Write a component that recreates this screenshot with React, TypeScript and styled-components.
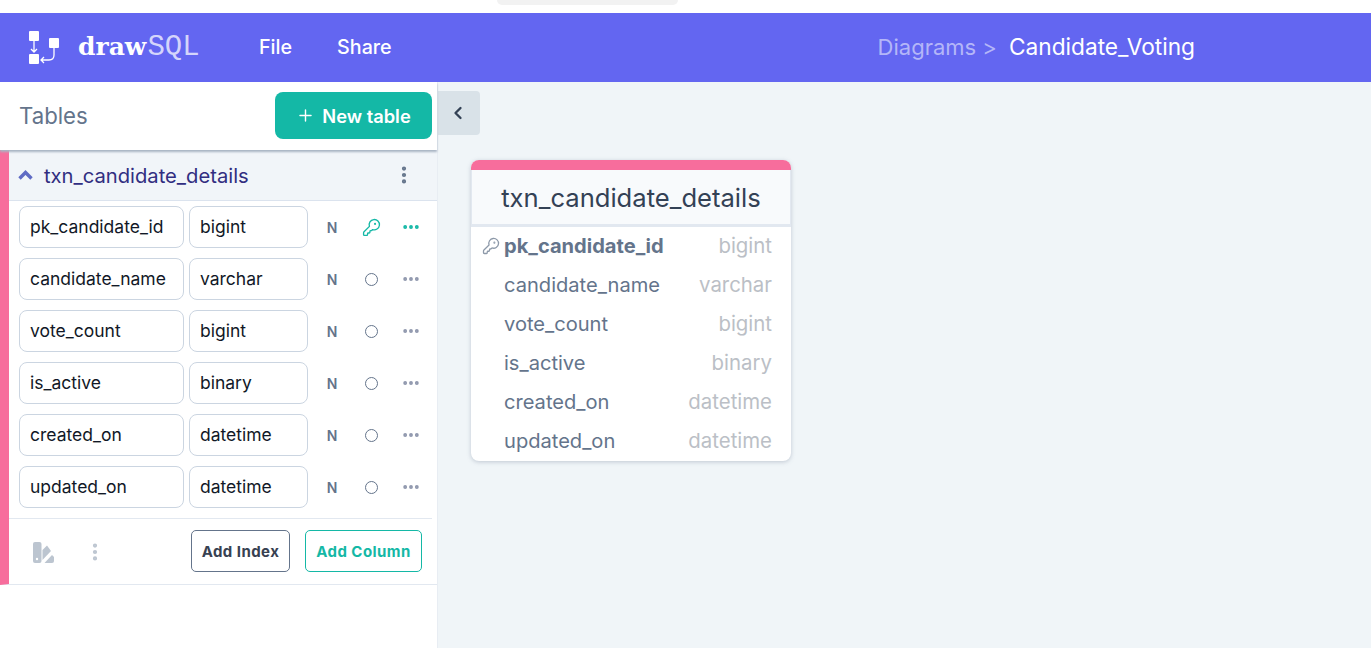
import React from 'react';
import styled, { createGlobalStyle } from 'styled-components';
import { ChevronLeft, KeyRound, MoreHorizontal, MoreVertical, Plus } from 'lucide-react';

const GlobalStyle = createGlobalStyle`
    html, body {
        margin: 0;
        height: 100%;
        overflow: hidden;
        background: #fff;
        font-family: Inter, "Liberation Sans", sans-serif;
    }
    * { box-sizing: border-box; }
`

const Page = styled.div`
    width: 1371px;
    height: 648px;
    display: flex;
    flex-direction: column;
    position: relative;
`

const TopStrip = styled.div`
    height: 13px;
    flex: none;
    padding-left: 497px;
`

const BrowserPill = styled.div`
    width: 181px;
    height: 5px;
    background: #f2f2f2;
    border-radius: 0 0 10px 10px;
`

const Header = styled.header`
    height: 69px;
    flex: none;
    background: #6366f1;
    display: flex;
    align-items: center;
    padding: 0 0 2px 27px;
    color: #fff;
`

const Brand = styled.div`
    display: flex;
    align-items: center;
    width: 232px;
    padding-top: 2px;
`

const BrandText = styled.div`
    margin-left: 18px;
    display: flex;
    align-items: baseline;
`

const BrandBold = styled.span`
    font-family: "DejaVu Serif", serif;
    font-weight: 700;
    font-size: 25px;
`

const BrandLight = styled.span`
    font-family: "Liberation Mono", monospace;
    font-size: 29px;
    color: #d4d5fb;
    margin-left: 1px;
`

const NavItem = styled.div`
    font-size: 19.7px;
    font-weight: 500;
    margin-right: 45px;
`

const Breadcrumb = styled.div`
    margin-left: auto;
    margin-right: 176px;
    display: flex;
    align-items: baseline;
    gap: 12px;
    font-size: 22.7px;
`

const Crumb = styled.span`
    color: #b4b6f8;
    font-size: 22px;
`

const Main = styled.div`
    flex: 1;
    display: flex;
    min-height: 0;
`

const Sidebar = styled.aside`
    width: 437px;
    flex: none;
    background: #fff;
`

const SidebarHead = styled.div`
    height: 68px;
    padding: 10px 5px 0 19px;
    display: flex;
    justify-content: space-between;
    align-items: flex-start;
    box-shadow: 0 2px 2px #a9b4c4;
    position: relative;
`

const SidebarTitle = styled.div`
    font-size: 22.2px;
    line-height: 48px;
    color: #64748b;
`

const NewTable = styled.button`
    width: 157px;
    height: 47px;
    border: 0;
    border-radius: 8px;
    background: #14b8a6;
    color: #fff;
    display: flex;
    align-items: center;
    justify-content: center;
    gap: 7px;
    font: 600 18.3px Inter, sans-serif;
`

const TableBlock = styled.div`
    border-left: 9px solid #f76d9c;
    border-bottom: 1px solid #e2e8f0;
`

const TableHead = styled.div`
    height: 51px;
    background: #f1f5f9;
    border-bottom: 1px solid #dbe3ee;
    display: flex;
    align-items: center;
    padding: 0 22px 0 9px;
    color: #312e81;
    font-size: 20.2px;
`

const ChevronBox = styled.svg`
    width: 15px;
    height: 10px;
    margin-right: 11px;
    color: #5f6bc4;
`

const HeadMenu = styled.span`
    margin-left: auto;
    display: flex;
    color: #64748b;
`

const Rows = styled.div`
    padding: 5px 0 0 10px;
    display: flex;
    flex-direction: column;
    gap: 10px;
`

const Row = styled.div`
    display: flex;
    align-items: center;
    height: 42px;
`

const Field = styled.div<{ $w: number }>`
    width: ${p => p.$w}px;
    flex: none;
    height: 42px;
    margin-right: 5px;
    border: 1px solid #cbd5e1;
    border-radius: 8px;
    padding: 0 10px 2px;
    display: flex;
    align-items: center;
    font-size: 17.5px;
    color: #111827;
    white-space: nowrap;
`

const RowTool = styled.div<{ $w: number; $color: string }>`
    width: ${p => p.$w}px;
    height: 20px;
    flex: none;
    display: flex;
    align-items: center;
    justify-content: center;
    color: ${p => p.$color};
    font-size: 14px;
    font-weight: 600;
`

const Circle = styled.span`
    width: 13px;
    height: 13px;
    border-radius: 50%;
    border: 1.5px solid #64748b;
    margin-top: 1px;
`

const Footer = styled.div`
    margin-top: 10px;
    margin-right: 5px;
    border-top: 1px solid #e2e8f0;
    height: 66px;
    display: flex;
    align-items: center;
    padding: 0 10px 1px 24px;
`

const Swatch = styled.svg`
    width: 22px;
    height: 21px;
    margin-top: 3px;
`

const FooterMenu = styled.span`
    display: flex;
    margin: 2px 0 0 29px;
    color: #bcc5d0;
`

const FooterButton = styled.button<{ $w: number; $color: string; $first?: boolean }>`
    width: ${p => p.$w}px;
    height: 42px;
    margin-left: ${p => (p.$first ? 'auto' : '15px')};
    padding: 0;
    background: #fff;
    border: 1px solid ${p => p.$color};
    border-radius: 5px;
    color: ${p => (p.$first ? '#374151' : p.$color)};
    font: 700 15px Inter, sans-serif;
    letter-spacing: 0.45px;
    white-space: nowrap;
`

const Canvas = styled.main`
    flex: 1;
    background: #f0f5f8;
    border-left: 1px solid #e8edf3;
    padding: 9px 0 0 0;
`

const Collapse = styled.div`
    width: 42px;
    height: 44px;
    background: #d9e2e8;
    border-radius: 0 4px 4px 0;
    display: flex;
    align-items: center;
    justify-content: center;
    padding-right: 2px;
    color: #334155;
`

const Card = styled.div`
    width: 320px;
    margin: 25px 0 0 33px;
    background: #fff;
    border-radius: 8px;
    overflow: hidden;
    box-shadow: 0 1px 4px rgba(100, 116, 139, 0.35);
`

const CardStripe = styled.div`
    height: 10px;
    background: #f76d9c;
`

const CardTitle = styled.div`
    height: 57px;
    background: #f8fafc;
    border: 1px solid #e2e8f0;
    border-width: 0 1px 3px;
    display: flex;
    align-items: center;
    justify-content: center;
    font-size: 25.6px;
    color: #334155;
`

const CardRow = styled.div`
    height: 39px;
    display: flex;
    align-items: center;
    padding: 0 19px 2px 33px;
    position: relative;
    font-size: 20.1px;
`

const ColumnName = styled.span<{ $primary?: boolean }>`
    color: #64748b;
    font-weight: ${p => (p.$primary ? 700 : 400)};
`

const ColumnType = styled.span`
    margin-left: auto;
    color: #bbbfc6;
    font-size: 20.4px;
`

const PkIcon = styled.span`
    position: absolute;
    left: 11px;
    top: 10px;
    display: flex;
    color: #8d99a9;
`

const columns = [
    { name: 'pk_candidate_id', type: 'bigint' },
    { name: 'candidate_name', type: 'varchar' },
    { name: 'vote_count', type: 'bigint' },
    { name: 'is_active', type: 'binary' },
    { name: 'created_on', type: 'datetime' },
    { name: 'updated_on', type: 'datetime' },
];

const Logo = () => (
    <svg width="33" height="34" viewBox="0 0 33 34" fill="none">
        <rect x="2" y="0" width="10" height="10" rx="1" fill="#fff" />
        <rect x="2" y="23" width="10" height="10" rx="1" fill="#fff" />
        <rect x="22" y="7" width="10" height="10" rx="1" fill="#fff" />
        <path d="M7 10v11M4 18l3 3 3-3" stroke="#fff" strokeWidth="1.3" />
        <path d="M27 17v7c0 3-2 5-5 5h-8M17 26l-3 3 3 3" stroke="#fff" strokeWidth="1.3" />
    </svg>
);

const App: React.FC = () => {
    return (
        <Page>
            <GlobalStyle />
            <TopStrip>
                <BrowserPill />
            </TopStrip>
            <Header>
                <Brand>
                    <Logo />
                    <BrandText>
                        <BrandBold>draw</BrandBold>
                        <BrandLight>SQL</BrandLight>
                    </BrandText>
                </Brand>
                <NavItem>File</NavItem>
                <NavItem>Share</NavItem>
                <Breadcrumb>
                    <Crumb>Diagrams &gt;</Crumb>
                    <span>Candidate_Voting</span>
                </Breadcrumb>
            </Header>
            <Main>
                <Sidebar>
                    <SidebarHead>
                        <SidebarTitle>Tables</SidebarTitle>
                        <NewTable>
                            <Plus size={19} strokeWidth={1.8} />
                            New table
                        </NewTable>
                    </SidebarHead>
                    <TableBlock>
                        <TableHead>
                            <ChevronBox viewBox="0 0 15 10" fill="none">
                                <path d="M1.5 8.5l6-6 6 6" stroke="currentColor" strokeWidth="3.4" />
                            </ChevronBox>
                            txn_candidate_details
                            <HeadMenu>
                                <MoreVertical size={22} strokeWidth={2.6} />
                            </HeadMenu>
                        </TableHead>
                        <Rows>
                            {columns.map((c, i) => (
                                <Row key={c.name}>
                                    <Field $w={165}>{c.name}</Field>
                                    <Field $w={119}>{c.type}</Field>
                                    <RowTool $w={38} $color="#64748b">N</RowTool>
                                    <RowTool $w={41} $color={i === 0 ? '#14b8a6' : '#64748b'}>
                                        {i === 0 ? <KeyRound size={19} strokeWidth={1.7} /> : <Circle />}
                                    </RowTool>
                                    <RowTool $w={38} $color={i === 0 ? '#14b8a6' : '#8f97ad'}>
                                        <MoreHorizontal size={20} strokeWidth={2.6} />
                                    </RowTool>
                                </Row>
                            ))}
                        </Rows>
                        <Footer>
                            <Swatch viewBox="0 0 22 21" fill="#bcc5d0">
                                <path d="M0 2a2 2 0 0 1 2-2h4.500a2 2 0 0 1 2 2v17a2 2 0 0 1-2 2H2a2 2 0 0 1-2-2z" />
                                <path d="M9.500 8L14 3.500 18 9l-8.500 9z" />
                                <path d="M11.500 21L19 13l2 2v4a2 2 0 0 1-2 2z" />
                                <circle cx="4" cy="17" r="1.2" fill="#fff" />
                            </Swatch>
                            <FooterMenu>
                                <MoreVertical size={22} strokeWidth={2.6} />
                            </FooterMenu>
                            <FooterButton $first $w={99} $color="#64748b">Add Index</FooterButton>
                            <FooterButton $w={117} $color="#14b8a6">Add Column</FooterButton>
                        </Footer>
                    </TableBlock>
                </Sidebar>
                <Canvas>
                    <Collapse>
                        <ChevronLeft size={20} strokeWidth={2.8} />
                    </Collapse>
                    <Card>
                        <CardStripe />
                        <CardTitle>txn_candidate_details</CardTitle>
                        {columns.map((c, i) => (
                            <CardRow key={c.name}>
                                {i === 0 && (
                                    <PkIcon>
                                        <KeyRound size={18} strokeWidth={1.7} />
                                    </PkIcon>
                                )}
                                <ColumnName $primary={i === 0}>{c.name}</ColumnName>
                                <ColumnType>{c.type}</ColumnType>
                            </CardRow>
                        ))}
                    </Card>
                </Canvas>
            </Main>
        </Page>
    )
}

export default App;
